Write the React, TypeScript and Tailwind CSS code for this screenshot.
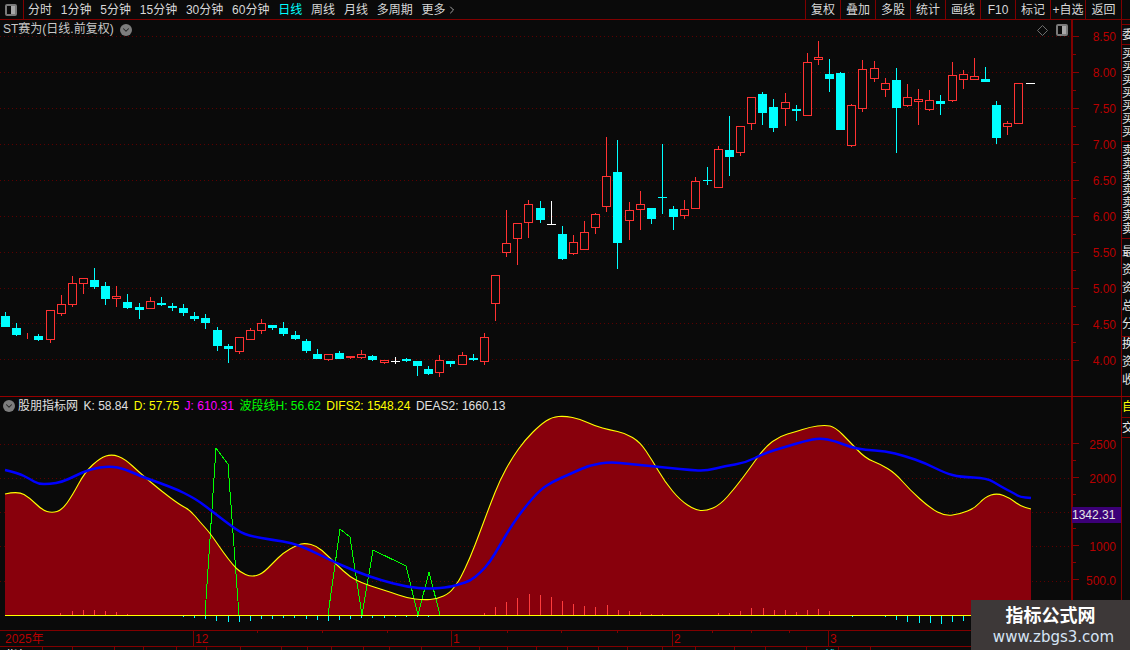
import React from 'react';
import { ChevronDown, ChevronRight } from 'lucide-react';

// type, high, body top, body bottom, low (page pixels)
type Candle = ['r' | 'c' | 'w', number, number, number, number];

const candles: Candle[] = [
  ['c', 312, 316, 327, 327], ['c', 323, 328, 335, 336], ['r', 333, 336, 337, 339], ['c', 334, 336, 340, 341],
  ['r', 310, 310, 340, 343], ['r', 295, 304, 314, 316], ['r', 276, 283, 305, 307], ['r', 278, 278, 284, 294],
  ['c', 268, 280, 287, 289], ['c', 282, 286, 299, 305], ['r', 286, 296, 299, 307], ['c', 294, 302, 308, 309],
  ['c', 303, 307, 310, 319], ['r', 297, 301, 309, 309], ['c', 297, 303, 305, 306], ['c', 303, 306, 308, 311],
  ['c', 304, 308, 313, 316], ['c', 312, 316, 319, 321], ['c', 314, 318, 323, 329], ['c', 327, 330, 346, 351],
  ['c', 344, 346, 349, 363], ['r', 337, 337, 352, 354], ['r', 328, 330, 340, 340], ['r', 319, 323, 331, 334],
  ['c', 325, 325, 328, 330], ['c', 322, 328, 334, 336], ['c', 331, 335, 339, 340], ['c', 339, 341, 351, 353],
  ['c', 349, 354, 359, 359], ['r', 354, 354, 360, 361], ['c', 351, 353, 359, 359], ['r', 356, 356, 358, 359],
  ['r', 350, 354, 358, 359], ['c', 355, 356, 360, 361], ['r', 360, 360, 363, 364], ['w', 357, 361, 362, 364],
  ['c', 358, 359, 361, 362], ['c', 361, 361, 366, 376], ['c', 366, 369, 374, 375], ['r', 355, 360, 373, 377],
  ['c', 361, 361, 364, 367], ['r', 352, 355, 365, 365], ['c', 354, 358, 360, 361], ['r', 333, 337, 362, 365],
  ['r', 275, 275, 304, 321], ['r', 210, 243, 253, 257], ['r', 223, 223, 239, 265], ['r', 200, 204, 223, 238],
  ['c', 201, 208, 220, 223], ['w', 201, 224, 225, 225], ['c', 226, 234, 259, 260], ['r', 235, 242, 254, 255],
  ['r', 221, 232, 250, 250], ['r', 213, 214, 228, 234], ['r', 137, 176, 207, 212], ['c', 140, 172, 243, 269],
  ['r', 202, 210, 221, 240], ['r', 191, 204, 210, 230], ['c', 208, 208, 219, 224], ['c', 144, 197, 198, 214],
  ['c', 206, 209, 217, 230], ['r', 200, 209, 216, 219], ['r', 177, 181, 209, 209], ['c', 167, 180, 181, 185],
  ['r', 146, 149, 188, 188], ['c', 116, 150, 157, 176], ['r', 126, 126, 153, 156], ['r', 97, 97, 124, 130],
  ['c', 92, 94, 113, 125], ['c', 99, 107, 128, 132], ['r', 93, 102, 109, 126], ['c', 105, 109, 111, 121],
  ['r', 53, 62, 116, 116], ['r', 41, 57, 60, 65], ['c', 59, 74, 79, 92], ['c', 72, 73, 130, 130],
  ['r', 104, 105, 146, 147], ['r', 60, 69, 109, 112], ['r', 61, 68, 79, 82], ['r', 78, 83, 90, 97],
  ['c', 68, 80, 108, 153], ['r', 84, 97, 106, 107], ['r', 89, 99, 102, 125], ['r', 90, 100, 110, 111],
  ['c', 95, 101, 104, 115], ['r', 62, 75, 101, 102], ['r', 70, 74, 80, 89], ['r', 58, 76, 80, 80],
  ['c', 67, 79, 82, 82], ['c', 101, 105, 138, 144], ['r', 121, 123, 127, 135], ['r', 83, 83, 124, 124],
  ['w', 83, 83, 84, 84],
];

const kdCurve = [
  [5, 494], [18, 491], [30, 498], [42, 510], [52, 513], [62, 510], [72, 496], [85, 472], [100, 458], [112, 454],
  [125, 459], [140, 473], [160, 490], [180, 505], [190, 510], [200, 522], [210, 533], [223, 552], [233, 565],
  [240, 572], [251, 577], [262, 574], [273, 563], [283, 553], [297, 545], [305, 543], [317, 546], [327, 555],
  [337, 565], [350, 577], [362, 583], [377, 588], [390, 592], [407, 598], [423, 600], [437, 599], [450, 593],
  [457, 583], [460, 579], [470, 558], [480, 532], [490, 505], [500, 480], [512, 458], [525, 440], [540, 425],
  [552, 417], [565, 416], [580, 419], [595, 426], [610, 430], [625, 433], [640, 442], [652, 460], [665, 482],
  [680, 500], [695, 510], [706, 511], [720, 505], [735, 488], [750, 468], [765, 447], [780, 436], [795, 432],
  [810, 427], [825, 425], [835, 427], [850, 442], [865, 458], [880, 464], [895, 473], [910, 490], [930, 508],
  [945, 516], [960, 514], [975, 508], [985, 497], [997, 493], [1010, 498], [1020, 506], [1031, 509],
];

const deaCurve = [
  [5, 470], [18, 473], [30, 479], [38, 484], [50, 484], [62, 482], [75, 476], [90, 469], [110, 466], [125, 469],
  [140, 476], [160, 483], [178, 490], [190, 496], [200, 502], [213, 512], [230, 525], [240, 532], [250, 536],
  [273, 540], [293, 543], [310, 550], [330, 560], [357, 572], [380, 580], [407, 587], [430, 589], [450, 587],
  [460, 584], [470, 581], [480, 573], [490, 562], [500, 545], [512, 525], [525, 507], [540, 490], [552, 482],
  [570, 474], [590, 465], [610, 462], [630, 464], [650, 466], [670, 468], [690, 470], [706, 471], [725, 466],
  [745, 463], [765, 453], [785, 447], [805, 441], [820, 438], [835, 441], [850, 447], [865, 450], [885, 451],
  [905, 456], [925, 463], [945, 473], [960, 477], [987, 478], [1000, 486], [1015, 494], [1020, 497], [1031, 498],
];

// the wave line only shows where it rises off the zero line
const waveSegments = [
  [[205, 615], [216, 448], [228, 464], [239, 615]],
  [[328, 615], [340, 529], [350, 537], [362, 615], [373, 550], [406, 566], [418, 615], [429, 572], [440, 615]],
];

const redBars = [
  [60, 2], [72, 4], [83, 5], [94, 5], [105, 4], [116, 3], [127, 1], [484, 2], [495, 8], [506, 13], [517, 17],
  [529, 21], [540, 20], [551, 18], [562, 14], [573, 11], [584, 9], [595, 8], [607, 10], [618, 5], [629, 4],
  [640, 3], [651, 1], [662, 1], [718, 2], [729, 2], [740, 4], [751, 7], [763, 7], [774, 5], [785, 5], [796, 3],
  [807, 5], [818, 6], [829, 4],
];

const cyanBars = [
  [183, 1], [194, 2], [205, 3], [216, 5], [228, 6], [239, 6], [250, 5], [261, 3], [272, 3], [283, 2], [294, 2],
  [306, 3], [317, 4], [328, 5], [339, 4], [350, 3], [361, 2], [372, 2], [384, 2], [395, 1], [406, 1], [417, 1],
  [428, 1], [852, 1], [885, 1], [896, 4], [907, 6], [919, 7], [930, 7], [941, 8], [952, 6], [963, 5],
];

const priceGrid = [36, 72, 108, 144, 180, 216, 252, 288, 323, 359];
const indicatorGrid = [444, 478, 512, 546, 581];
const dateTicks = [257, 322, 387, 507, 561, 617, 712, 751, 789];
const periods = ['分时', '1分钟', '5分钟', '15分钟', '30分钟', '60分钟', '日线', '周线', '月线', '多周期'];
const actions = ['复权', '叠加', '多股', '统计', '画线', 'F10', '标记', '+自选'];
const tabWidths = [43, 30, 42, 29, 33, 30, 34, 41, 26, 24, 32, 26, 32, 58, 28, 29, 31, 31, 29, 35, 33, 39, 31, 41, 32, 32];

// soften the reference points with midpoint quadratics
const smooth = (pts: number[][]) => {
  let d = `M${pts[0][0]} ${pts[0][1]}`;
  for (let i = 1; i < pts.length - 1; i++) {
    const mx = (pts[i][0] + pts[i + 1][0]) / 2;
    const my = (pts[i][1] + pts[i + 1][1]) / 2;
    d += ` Q${pts[i][0]} ${pts[i][1]} ${mx} ${my}`;
  }
  const last = pts[pts.length - 1];
  return `${d} L${last[0]} ${last[1]}`;
};

function PanelIcon() {
  return (
    <div className="flex h-3 w-3 rounded-[2px] border-2 border-[#7a7a7a]">
      <div className="flex-1 bg-[#0a0a0a]" />
      <div className="flex-1 bg-[#a8a8a8]" />
    </div>
  );
}

function CircleChevron() {
  return (
    <div className="flex h-3 w-3 items-center justify-center rounded-full bg-[#7d7d7d]">
      <ChevronDown size={10} strokeWidth={2.5} className="text-[#222]" />
    </div>
  );
}

function CandleChart() {
  return (
    <svg width={1071} height={376} viewBox="0 20 1071 376" className="block">
      {priceGrid.map((y) => (
        <line
          key={y}
          x1={0}
          x2={1071}
          y1={y + 0.5}
          y2={y + 0.5}
          stroke="#5c0000"
          strokeDasharray="1 3"
          shapeRendering="crispEdges"
        />
      ))}
      {candles.map(([type, high, top, bottom, low], i) => {
        const x = Math.floor(5.5 + 11.136 * i);
        const color = type === 'r' ? '#ff3232' : type === 'c' ? '#00ffff' : '#ffffff';
        return (
          <g key={i}>
            <rect x={x} y={high} width={1} height={low - high} fill={color} />
            {type === 'r' ? (
              <rect x={x - 3.5} y={top + 0.5} width={8} height={bottom - top - 1} fill="#0a0a0a" stroke={color} />
            ) : (
              <rect x={x - 4} y={top} width={9} height={bottom - top} fill={color} />
            )}
          </g>
        );
      })}
    </svg>
  );
}

function IndicatorChart() {
  const kdPath = smooth(kdCurve);
  return (
    <svg width={1071} height={233} viewBox="0 397 1071 233" className="block">
      {indicatorGrid.map((y) => (
        <line
          key={y}
          x1={0}
          x2={1071}
          y1={y + 0.5}
          y2={y + 0.5}
          stroke="#5c0000"
          strokeDasharray="1 3"
          shapeRendering="crispEdges"
        />
      ))}
      <path d={`${kdPath} L1031 615 L5 615 Z`} fill="#88000c" />
      {redBars.map(([x, h]) => (
        <rect key={x} x={x} y={615 - h} width={1} height={h} fill="#ff3c3c" />
      ))}
      {cyanBars.map(([x, h]) => (
        <rect key={x} x={x} y={616} width={1} height={h} fill="#00ffff" />
      ))}
      {waveSegments.map((seg, i) => (
        <polyline
          key={i}
          points={seg.map((p) => p.join(',')).join(' ')}
          fill="none"
          stroke="#00ff00"
          strokeWidth={1}
          shapeRendering="crispEdges"
        />
      ))}
      <rect x={5} y={615} width={1066} height={1} fill="#ffff00" />
      <path d={kdPath} fill="none" stroke="#ffff00" strokeWidth={1.1} />
      <path d={smooth(deaCurve)} fill="none" stroke="#0000ff" strokeWidth={2.5} />
    </svg>
  );
}

function AxisTicks({ labels, rowClass }: { labels: string[]; rowClass: string }) {
  return (
    <>
      {labels.map((label, i) => (
        <React.Fragment key={i}>
          <div className={`flex items-center ${rowClass}`}>
            <div className="h-px w-[6px] bg-[#8b0000]" />
            <span className="ml-auto mr-[5px] pt-[2px] leading-none">{label}</span>
          </div>
          {i < labels.length - 1 && (
            <div className={`flex items-center ${rowClass}`}>
              <div className="h-px w-[3px] bg-[#8b0000]" />
            </div>
          )}
        </React.Fragment>
      ))}
    </>
  );
}

function StripCell({ chars, className }: { chars: string; className: string }) {
  return (
    <div className={`flex flex-col overflow-hidden border-b border-[#800000] text-[#e6e6e6] ${className}`}>
      {chars.split('').map((c, i) => (
        <span key={i} className="w-3 leading-none">
          {c}
        </span>
      ))}
    </div>
  );
}

export default function App() {
  return (
    <div className="relative flex h-[650px] w-[1130px] flex-col overflow-hidden bg-[#0a0a0a] font-['Liberation_Sans','Noto_Sans_CJK_SC',sans-serif] text-xs text-[#d8d8d8]">
      {/* Top toolbar */}
      <div className="flex h-5 shrink-0 items-stretch border-b border-[#800000]">
        <div className="flex w-6 items-center justify-center border-r border-[#800000] pr-px">
          <PanelIcon />
        </div>
        <div className="ml-1 flex items-center gap-[8.8px]">
          {periods.map((p) => (
            <span key={p} className={p === '日线' ? 'text-[#00ffff]' : ''}>
              {p}
            </span>
          ))}
          <span className="flex items-center">
            更多
            <ChevronRight size={12} strokeWidth={1.5} />
          </span>
        </div>
        <div className="ml-auto flex">
          {actions.map((a) => (
            <div key={a} className="flex w-[35px] items-center justify-center border-l border-[#800000]">
              {a}
            </div>
          ))}
          <div className="flex w-[37px] items-center justify-center border-x border-[#800000]">返回</div>
          <div className="w-2" />
        </div>
      </div>

      {/* Candle pane */}
      <div className="flex h-[376px] shrink-0">
        <div className="relative w-[1071px]">
          <CandleChart />
          <div className="absolute left-[3px] top-[1px] flex items-center gap-[6px]">
            <span className="leading-[17px] text-[#c8c8c8]">ST赛为(日线.前复权)</span>
            <CircleChevron />
          </div>
          <div className="absolute right-[3px] top-[4px] flex items-center gap-[8px]">
            <svg width={11} height={11} viewBox="0 0 11 11">
              <path d="M5.5 0.5 L10.5 5.5 L5.5 10.5 L0.5 5.5 Z" fill="none" stroke="#6e6e6e" />
            </svg>
            <PanelIcon />
          </div>
        </div>
        <div className="w-[50px] border-l-2 border-[#800000] pt-[7px] text-[#b80000]">
          <AxisTicks
            rowClass="h-[18px]"
            labels={['8.50', '8.00', '7.50', '7.00', '6.50', '6.00', '5.50', '5.00', '4.50', '4.00']}
          />
        </div>
        <div className="flex w-[9px] flex-col border-l border-[#800000]">
          <div className="h-[5px] border-b border-[#800000]" />
          <StripCell chars="委" className="h-[20px] justify-center" />
          <StripCell chars="买买买买买买买" className="h-[97px] gap-px justify-center" />
          <StripCell chars="卖卖卖卖卖卖卖" className="h-[97px] gap-px justify-center" />
          <StripCell chars="最资资总分" className="h-[98px] gap-[6px] justify-center" />
          <div className="flex flex-col gap-[6px] overflow-hidden pt-[1px] text-[#e6e6e6]">
            {'换资收'.split('').map((c, i) => (
              <span key={i} className="w-3 leading-none">
                {c}
              </span>
            ))}
          </div>
        </div>
      </div>

      {/* Indicator pane */}
      <div className="flex h-[234px] shrink-0 border-t border-[#960000]">
        <div className="relative w-[1071px]">
          <IndicatorChart />
          <div className="absolute left-[3px] top-[2px] flex items-center gap-[5.5px] leading-[14px] text-[#e0e0e0]">
            <div className="flex items-center gap-[3px]">
              <CircleChevron />
              <span>股朋指标网</span>
            </div>
            <span>K: 58.84</span>
            <span className="text-[#ffff00]">D: 57.75</span>
            <span className="text-[#ff00ff]">J: 610.31</span>
            <span className="text-[#00ff00]">波段线H: 56.62</span>
            <span className="text-[#ffff00]">DIFS2: 1548.24</span>
            <span>DEAS2: 1660.13</span>
          </div>
        </div>
        <div className="relative w-[50px] border-l-2 border-[#800000] pt-[38px] text-[#b80000]">
          <AxisTicks rowClass="h-[17px]" labels={['2500', '2000', '', '1000', '500.0']} />
          <div className="absolute left-[-1px] right-0 top-[110px] flex h-4 items-center bg-[#3c0078] text-[#e6e6e6]">
            1342.31
          </div>
        </div>
        <div className="flex w-[9px] flex-col border-l border-[#800000]">
          <div className="flex h-[21px] items-center overflow-hidden border-b border-[#800000] text-[#ffff00]">
            <span className="w-3 shrink-0">自</span>
          </div>
          <div className="flex h-[20px] items-center overflow-hidden border-b border-[#800000] text-[#e6e6e6]">
            <span className="w-3 shrink-0">交</span>
          </div>
        </div>
      </div>

      {/* Date axis */}
      <div className="relative flex h-4 shrink-0 border-t border-[#800000] leading-[17px] text-[#b80000]">
        <div className="w-[193px] pl-[5px]">2025年</div>
        <div className="w-[258px] border-l border-[#800000] pl-px">12</div>
        <div className="w-[221px] border-l border-[#800000] pl-px">1</div>
        <div className="w-[156px] border-l border-[#800000] pl-px">2</div>
        <div className="border-l border-[#800000] pl-px">3</div>
        <svg width={1071} height={3} className="absolute left-0 top-0">
          {dateTicks.map((x) => (
            <rect key={x} x={x} y={0} width={1} height={2} fill="#800000" />
          ))}
        </svg>
      </div>

      {/* Bottom tabs, cut off by the window edge */}
      <div className="flex h-1 shrink-0 overflow-hidden border-t border-[#800000] leading-[19px]">
        {tabWidths.map((w, i) => (
          <div key={i} className="border-r border-[#800000]" style={{ width: w }}>
            {i === 0 && <span className="ml-[6px] text-white">指标</span>}
            {i === 24 && <span className="ml-[5px] text-[#00ffff]">日线</span>}
          </div>
        ))}
      </div>

      {/* Watermark */}
      <div className="absolute bottom-0 right-0 flex h-[50px] w-[159px] flex-col items-center bg-[#3d3838] pt-[4px] text-white">
        <span className="text-[18px] font-bold leading-[24px]">指标公式网</span>
        <span className="ml-[6px] font-['DejaVu_Sans',sans-serif] text-[15px] leading-[19px] text-[#d6e4f5]">www.zbgs3.com</span>
      </div>
    </div>
  );
}
